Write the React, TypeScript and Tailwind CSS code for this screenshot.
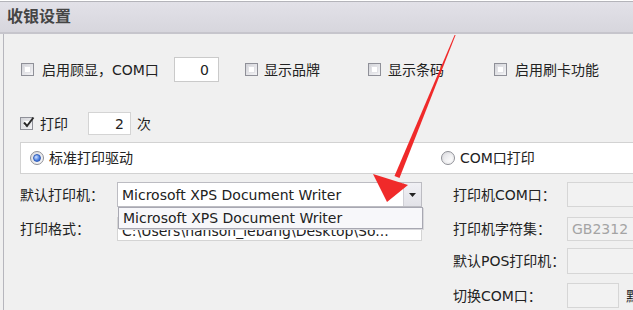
import React from "react";

function Check({ checked }: { checked?: boolean }) {
  return (
    <span className="relative flex h-[13px] w-[13px] shrink-0 border border-[#8f9098] bg-linear-to-br from-[#d2d3d8] to-[#f4f4f6] p-[2px]">
      <span className="flex-1 border border-[#e2e2e6] bg-white" />
      {checked && (
        <svg className="absolute left-[1px] top-[-2px]" width="13" height="13" viewBox="0 0 13 13">
          <path d="M2 6.5 L5 10 L11.5 1.5" fill="none" stroke="#2a2a2a" strokeWidth="2" />
        </svg>
      )}
    </span>
  );
}

function Radio({ checked }: { checked?: boolean }) {
  return (
    <span className="flex h-[14px] w-[14px] shrink-0 items-center justify-center rounded-full border border-[#8e8f96] bg-linear-to-br from-[#dcdce0] to-[#fafafa]">
      {checked ? (
        <span className="h-[8px] w-[8px] rounded-full border border-[#2f5cb8] bg-[radial-gradient(circle_at_35%_35%,#cfe0ff,#4a7ee0_60%,#2a55b8)]" />
      ) : (
        <span className="h-[8px] w-[8px] rounded-full bg-linear-to-br from-[#e4e4e8] to-white" />
      )}
    </span>
  );
}

export default function App() {
  return (
    <div className="relative h-[310px] w-[633px] overflow-hidden bg-[#f0f0f0] font-['DejaVu_Sans','Noto_Sans_CJK_SC',sans-serif] text-[14px] leading-none text-[#222]">
      {/* top strip */}
      <div className="h-[2px] border-b border-[#b4b4ba] bg-white" />
      {/* header */}
      <div className="flex h-[32px] items-center border-b-2 border-[#c6c5cc] bg-linear-to-b from-[#e2e1e8] to-[#d7d6dd] pl-[7px]">
        <span className="text-[16px] font-bold tracking-[0px] text-[#454545]">收银设置</span>
      </div>
      {/* body */}
      <div className="ml-[3px] h-[300px] border-l border-[#b6b6bd] pl-[16px] pt-[23px]">
        {/* row 1 */}
        <div className="flex h-[25px] items-center">
          <span className="ml-[1px]"><Check /></span>
          <span className="ml-[8px] w-[132px] whitespace-nowrap">启用顾显，COM口</span>
          <div className="flex h-[25px] w-[45px] items-center justify-end border border-[#cacaca] bg-white pr-[9px]">0</div>
          <span className="ml-[26px]"><Check /></span>
          <span className="ml-[6px] w-[104px] whitespace-nowrap">显示品牌</span>
          <Check />
          <span className="ml-[7px] w-[106px] whitespace-nowrap">显示条码</span>
          <Check />
          <span className="ml-[8px] whitespace-nowrap">启用刷卡功能</span>
        </div>
        {/* row 2 */}
        <div className="mt-[30px] flex h-[23px] items-center">
          <Check checked />
          <span className="ml-[7px] w-[48px] whitespace-nowrap">打印</span>
          <div className="flex h-[23px] w-[43px] items-center justify-end border border-[#d4d4d4] bg-white pr-[6px]">2</div>
          <span className="ml-[6px]">次</span>
        </div>
        {/* radio box */}
        <div className="mt-[7px] flex h-[32px] w-[640px] items-center border border-[#d2d2d2] bg-white pl-[9px]">
          <Radio checked />
          <span className="ml-[5px] w-[392px] whitespace-nowrap">标准打印驱动</span>
          <Radio />
          <span className="ml-[5px] whitespace-nowrap">COM口打印</span>
        </div>
        {/* two columns */}
        <div className="mt-[8px] flex">
          <div className="flex w-[402px] flex-col">
            <div className="flex h-[25px] items-center">
              <span className="w-[97px] whitespace-nowrap">默认打印机：</span>
              <div className="relative flex h-[25px] w-[305px] border border-[#bcbcc2] bg-white">
                <span className="flex flex-1 items-center pl-[4px] whitespace-nowrap">Microsoft XPS Document Writer</span>
                <span className="flex w-[18px] items-center justify-center border-l border-[#d0d0d6] bg-linear-to-b from-[#f0f0f4] to-[#e2e2e8]">
                  <svg width="7" height="4" viewBox="0 0 7 4"><path d="M0 0 H7 L3.5 4 Z" fill="#222" /></svg>
                </span>
                <div className="absolute left-0 top-[24px] z-10 flex h-[22px] w-[305px] items-center border border-[#a8a8b2] bg-[#f7f7fa] pl-[4px] whitespace-nowrap shadow-[1px_1px_0_#d8d8dc]">
                  Microsoft XPS Document Writer
                </div>
              </div>
            </div>
            <div className="mt-[10px] flex h-[24px] items-center">
              <span className="w-[97px] whitespace-nowrap">打印格式：</span>
              <div className="flex h-[24px] w-[305px] items-center overflow-hidden border border-[#d4d4d4] bg-white pl-[4px] pt-[4px] whitespace-nowrap">
                C:\Users\hanson_lebang\Desktop\So...
              </div>
            </div>
          </div>
          <div className="ml-[31px] flex flex-col">
            <div className="flex h-[25px] items-center">
              <span className="w-[114px] whitespace-nowrap">打印机COM口：</span>
              <div className="h-[25px] w-[80px] border border-[#d6d6d6] bg-[#f2f2f2]" />
            </div>
            <div className="mt-[10px] flex h-[24px] items-center">
              <span className="w-[114px] whitespace-nowrap">打印机字符集：</span>
              <div className="flex h-[24px] w-[80px] items-center border border-[#d6d6d6] bg-[#f2f2f2] pl-[4px] text-[#a4a4a4]">GB2312</div>
            </div>
            <div className="mt-[7px] flex h-[26px] items-center">
              <span className="w-[114px] whitespace-nowrap">默认POS打印机：</span>
              <div className="h-[26px] w-[80px] border border-[#d6d6d6] bg-[#f2f2f2]" />
            </div>
            <div className="mt-[9px] flex h-[25px] items-center">
              <span className="w-[114px] whitespace-nowrap">切换COM口：</span>
              <div className="h-[25px] w-[52px] border border-[#d6d6d6] bg-[#f2f2f2]" />
              <span className="ml-[7px] whitespace-nowrap">默认</span>
            </div>
          </div>
        </div>
      </div>
      {/* red arrow annotation */}
      <svg className="pointer-events-none absolute left-0 top-0" width="633" height="310" viewBox="0 0 633 310">
        <polygon points="454.6,35 455.6,35 399.5,178 394.5,176" fill="#f02a2a" />
        <polygon points="387,202 373,174 408,185" fill="#f02a2a" />
      </svg>
    </div>
  );
}
